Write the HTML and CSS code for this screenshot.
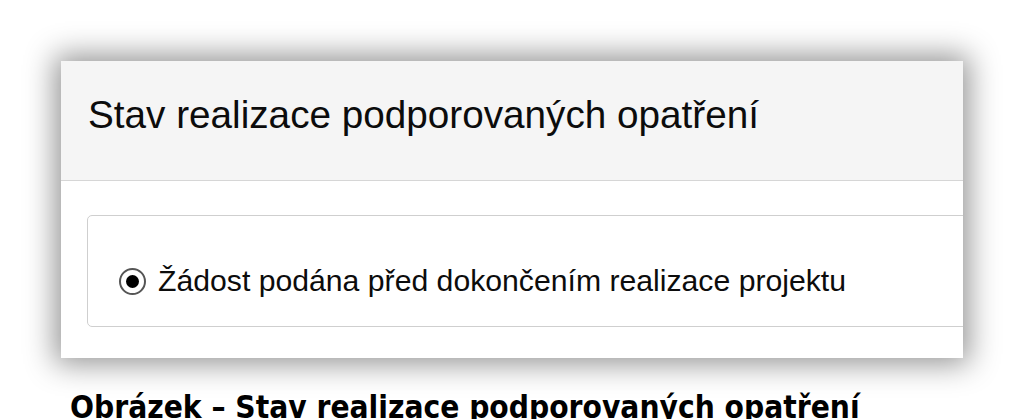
FILE: index.html
```html
<!DOCTYPE html>
<html lang="cs">
<head>
    <meta charset="UTF-8">
    <meta name="viewport" content="width=device-width, initial-scale=1.0">
    <title>Stav realizace podporovaných opatření</title>
    <link rel="stylesheet" href="styles.css">
</head>
<body>

    <div class="page">
        <div class="panel">
            <div class="panel-heading">Stav realizace podporovaných opatření</div>
            <div class="panel-body">
                <label class="option">
                    <span class="radio"><span class="dot"></span></span>
                    Žádost podána před dokončením realizace projektu
                </label>
            </div>
        </div>

        <p class="caption">Obrázek – Stav realizace podporovaných opatření</p>
    </div>

</body>
</html>
```

FILE: styles.css
```css
body {
    margin: 0;
    background: #fff;
    font-family: "Liberation Sans", Arial, sans-serif;
    color: #0c0c0c;
    overflow: hidden;
}
.page {
    padding: 61px 0 0 61px;
}
.panel {
    width: 902px;
    height: 297px;
    background: #fff;
    overflow: hidden;
    box-shadow: 0 0 28px 6px rgba(0, 0, 0, 0.42);
}
.panel-heading {
    height: 120px;
    box-sizing: border-box;
    padding: 35px 0 0 27px;
    background: #f5f5f5;
    border-bottom: 1px solid #d6d6d6;
    font-size: 38.7px;
    line-height: 1;
    white-space: nowrap;
}
.panel-body {
    padding: 34px 0 0 26px;
}
.option {
    display: flex;
    align-items: center;
    gap: 12px;
    width: 960px;
    height: 112px;
    box-sizing: border-box;
    padding: 20px 0 0 31px;
    border: 1px solid #cfcfcf;
    border-radius: 5px;
    font-size: 30.2px;
    line-height: 1;
    white-space: nowrap;
}
.radio {
    width: 23px;
    height: 23px;
    border: 2px solid #555;
    border-radius: 50%;
    display: flex;
    align-items: center;
    justify-content: center;
    background: #fff;
}
.dot {
    width: 13px;
    height: 13px;
    border-radius: 50%;
    background: #000;
}
.caption {
    margin: 34px 0 0 9px;
    font-family: "DejaVu Sans Condensed", "DejaVu Sans", sans-serif;
    font-stretch: condensed;
    font-weight: bold;
    font-size: 31.4px;
    line-height: 1;
    color: #000;
    white-space: nowrap;
}
```
